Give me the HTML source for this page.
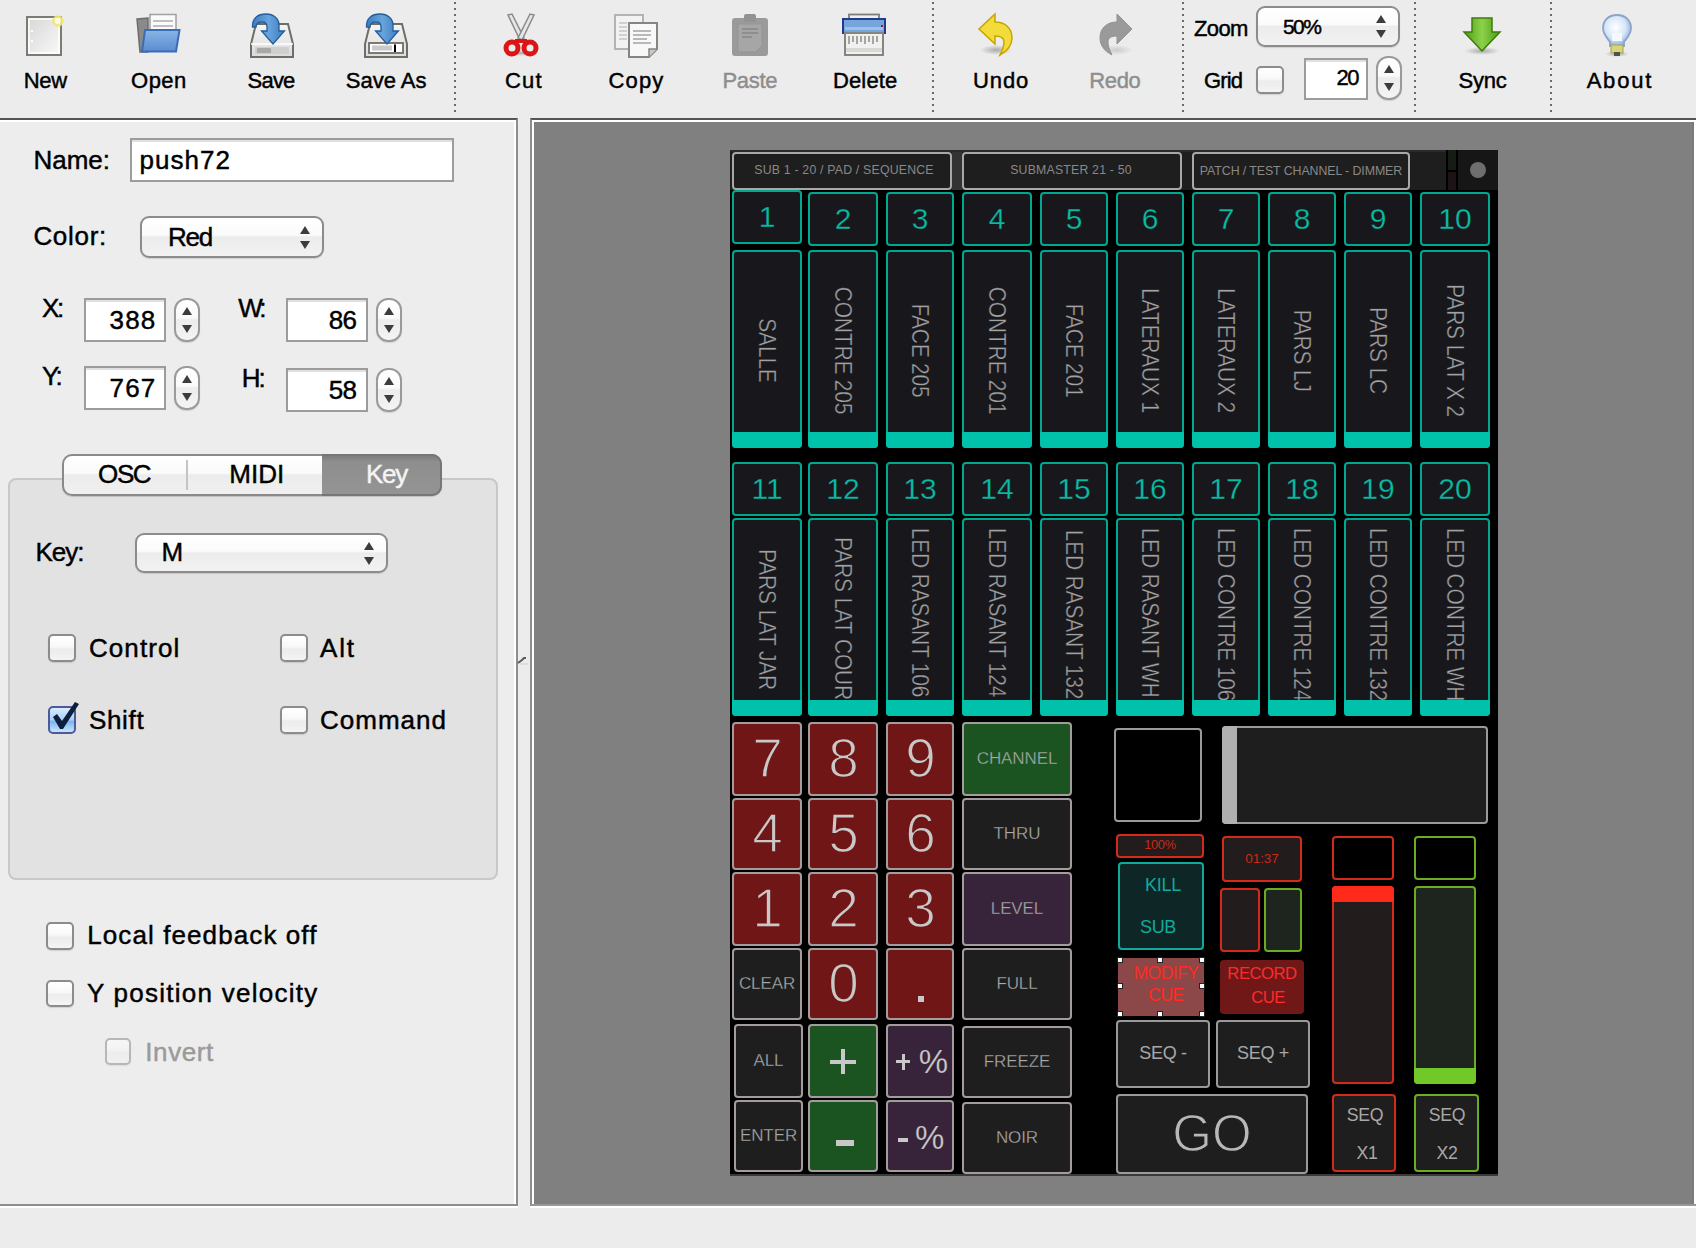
<!DOCTYPE html><html><head><meta charset="utf-8"><style>
html,body{margin:0;padding:0;}body{width:1696px;height:1248px;overflow:hidden;position:relative;background:#ececec;font-family:"Liberation Sans",sans-serif;}
div{position:absolute;}
</style></head><body>
<div style="position:absolute;left:0px;top:118px;width:518px;height:1088px;box-sizing:border-box;background:#ededed;border-top:2px solid #555;border-right:2px solid #8e8e8e;border-bottom:2px solid #8e8e8e;"></div>
<div style="position:absolute;left:0px;top:120px;width:516px;height:2px;box-sizing:border-box;background:#fff;"></div>
<div style="position:absolute;left:514px;top:120px;width:2px;height:1084px;box-sizing:border-box;background:#fff;"></div>
<div style="position:absolute;left:0px;top:1206px;width:518px;height:2px;box-sizing:border-box;background:#fff;"></div>
<div style="position:absolute;left:530px;top:118px;width:1166px;height:1088px;box-sizing:border-box;background:#808080;border-top:2px solid #555;border-left:2px solid #8e8e8e;border-bottom:2px solid #989898;"></div>
<div style="position:absolute;left:532px;top:120px;width:1164px;height:2px;box-sizing:border-box;background:#fff;"></div>
<div style="position:absolute;left:532px;top:120px;width:2px;height:1084px;box-sizing:border-box;background:#fff;"></div>
<div style="position:absolute;left:1692px;top:122px;width:2px;height:1082px;box-sizing:border-box;background:#7a7a7a;"></div>
<div style="position:absolute;left:1694px;top:120px;width:2px;height:1084px;box-sizing:border-box;background:#fff;"></div>
<div style="position:absolute;left:530px;top:1206px;width:1166px;height:2px;box-sizing:border-box;background:#fff;"></div>
<div style="position:absolute;left:730px;top:150px;width:768px;height:1026px;box-sizing:border-box;background:#000;border-bottom:2px solid #3a3a3a;"></div>
<div style="position:absolute;left:730px;top:150px;width:716px;height:40px;box-sizing:border-box;background:#1e1e1e;border-top:2px solid #2a2a2a;"></div>
<div style="position:absolute;left:952px;top:152px;width:10px;height:38px;box-sizing:border-box;background:#333;"></div>
<div style="position:absolute;left:732px;top:152px;width:220px;height:38px;box-sizing:border-box;background:#1e1e1e;border:2px solid #a8a8a8;border-radius:4px;"></div>
<div style="position:absolute;left:962px;top:152px;width:220px;height:38px;box-sizing:border-box;background:#1e1e1e;border:2px solid #a8a8a8;border-radius:4px;"></div>
<div style="position:absolute;left:1192px;top:152px;width:218px;height:38px;box-sizing:border-box;background:#1e1e1e;border:2px solid #a8a8a8;border-radius:4px;"></div>
<div style="position:absolute;left:694.0px;width:300px;text-align:center;top:162.57px;font-size:12.3px;line-height:14.14px;color:#888;white-space:nowrap;letter-spacing:0.2px;">SUB 1 - 20 / PAD / SEQUENCE</div>
<div style="position:absolute;left:921.0px;width:300px;text-align:center;top:162.57px;font-size:12.3px;line-height:14.14px;color:#888;white-space:nowrap;letter-spacing:0.2px;">SUBMASTER 21 - 50</div>
<div style="position:absolute;left:1151.0px;width:300px;text-align:center;top:164.01px;font-size:12.4px;line-height:14.26px;color:#888;white-space:nowrap;letter-spacing:-0.1px;">PATCH / TEST CHANNEL - DIMMER</div>
<div style="position:absolute;left:1448px;top:150px;width:8px;height:20px;box-sizing:border-box;background:#141c14;"></div>
<div style="position:absolute;left:1448px;top:172px;width:8px;height:18px;box-sizing:border-box;background:#1c1414;"></div>
<div style="position:absolute;left:1458px;top:150px;width:40px;height:40px;box-sizing:border-box;background:#161616;"></div>
<div style="position:absolute;left:1470px;top:162px;width:16px;height:16px;border-radius:50%;background:#6e6e6e;"></div>
<div style="position:absolute;left:732px;top:190px;width:70px;height:54px;box-sizing:border-box;background:#17171c;border:2px solid #00a890;border-radius:4px;"></div>
<div style="position:absolute;left:727.0px;width:80px;text-align:center;top:200.09px;font-size:30px;line-height:34.50px;color:#08bca4;white-space:nowrap;-webkit-text-stroke:0.3px #17171c;">1</div>
<div style="position:absolute;left:732px;top:250px;width:70px;height:198px;box-sizing:border-box;background:#17171c;border:2px solid #00a890;border-radius:4px;overflow:hidden;"></div>
<div style="position:absolute;left:617.0px;top:337.9px;width:300px;height:25.2px;line-height:25.2px;text-align:center;font-size:21px;letter-spacing:-0.2px;text-indent:-0.2px;color:#a2a2a2;-webkit-text-stroke:0.35px #17171c;white-space:nowrap;transform:rotate(90deg) scaleY(1.1);">SALLE</div>
<div style="position:absolute;left:732px;top:432px;width:70px;height:16px;box-sizing:border-box;background:#00c2aa;border-radius:0 0 4px 4px;"></div>
<div style="position:absolute;left:808px;top:192px;width:70px;height:54px;box-sizing:border-box;background:#17171c;border:2px solid #00a890;border-radius:4px;"></div>
<div style="position:absolute;left:803.0px;width:80px;text-align:center;top:202.09px;font-size:30px;line-height:34.50px;color:#08bca4;white-space:nowrap;-webkit-text-stroke:0.3px #17171c;">2</div>
<div style="position:absolute;left:808px;top:250px;width:70px;height:198px;box-sizing:border-box;background:#17171c;border:2px solid #00a890;border-radius:4px;overflow:hidden;"></div>
<div style="position:absolute;left:693.0px;top:337.9px;width:300px;height:25.2px;line-height:25.2px;text-align:center;font-size:21px;letter-spacing:-0.2px;text-indent:-0.2px;color:#a2a2a2;-webkit-text-stroke:0.35px #17171c;white-space:nowrap;transform:rotate(90deg) scaleY(1.1);">CONTRE 205</div>
<div style="position:absolute;left:808px;top:432px;width:70px;height:16px;box-sizing:border-box;background:#00c2aa;border-radius:0 0 4px 4px;"></div>
<div style="position:absolute;left:886px;top:192px;width:68px;height:54px;box-sizing:border-box;background:#17171c;border:2px solid #00a890;border-radius:4px;"></div>
<div style="position:absolute;left:880.0px;width:80px;text-align:center;top:202.09px;font-size:30px;line-height:34.50px;color:#08bca4;white-space:nowrap;-webkit-text-stroke:0.3px #17171c;">3</div>
<div style="position:absolute;left:886px;top:250px;width:68px;height:198px;box-sizing:border-box;background:#17171c;border:2px solid #00a890;border-radius:4px;overflow:hidden;"></div>
<div style="position:absolute;left:770.0px;top:337.9px;width:300px;height:25.2px;line-height:25.2px;text-align:center;font-size:21px;letter-spacing:-0.2px;text-indent:-0.2px;color:#a2a2a2;-webkit-text-stroke:0.35px #17171c;white-space:nowrap;transform:rotate(90deg) scaleY(1.1);">FACE 205</div>
<div style="position:absolute;left:886px;top:432px;width:68px;height:16px;box-sizing:border-box;background:#00c2aa;border-radius:0 0 4px 4px;"></div>
<div style="position:absolute;left:962px;top:192px;width:70px;height:54px;box-sizing:border-box;background:#17171c;border:2px solid #00a890;border-radius:4px;"></div>
<div style="position:absolute;left:957.0px;width:80px;text-align:center;top:202.09px;font-size:30px;line-height:34.50px;color:#08bca4;white-space:nowrap;-webkit-text-stroke:0.3px #17171c;">4</div>
<div style="position:absolute;left:962px;top:250px;width:70px;height:198px;box-sizing:border-box;background:#17171c;border:2px solid #00a890;border-radius:4px;overflow:hidden;"></div>
<div style="position:absolute;left:847.0px;top:337.9px;width:300px;height:25.2px;line-height:25.2px;text-align:center;font-size:21px;letter-spacing:-0.2px;text-indent:-0.2px;color:#a2a2a2;-webkit-text-stroke:0.35px #17171c;white-space:nowrap;transform:rotate(90deg) scaleY(1.1);">CONTRE 201</div>
<div style="position:absolute;left:962px;top:432px;width:70px;height:16px;box-sizing:border-box;background:#00c2aa;border-radius:0 0 4px 4px;"></div>
<div style="position:absolute;left:1040px;top:192px;width:68px;height:54px;box-sizing:border-box;background:#17171c;border:2px solid #00a890;border-radius:4px;"></div>
<div style="position:absolute;left:1034.0px;width:80px;text-align:center;top:202.09px;font-size:30px;line-height:34.50px;color:#08bca4;white-space:nowrap;-webkit-text-stroke:0.3px #17171c;">5</div>
<div style="position:absolute;left:1040px;top:250px;width:68px;height:198px;box-sizing:border-box;background:#17171c;border:2px solid #00a890;border-radius:4px;overflow:hidden;"></div>
<div style="position:absolute;left:924.0px;top:337.9px;width:300px;height:25.2px;line-height:25.2px;text-align:center;font-size:21px;letter-spacing:-0.2px;text-indent:-0.2px;color:#a2a2a2;-webkit-text-stroke:0.35px #17171c;white-space:nowrap;transform:rotate(90deg) scaleY(1.1);">FACE 201</div>
<div style="position:absolute;left:1040px;top:432px;width:68px;height:16px;box-sizing:border-box;background:#00c2aa;border-radius:0 0 4px 4px;"></div>
<div style="position:absolute;left:1116px;top:192px;width:68px;height:54px;box-sizing:border-box;background:#17171c;border:2px solid #00a890;border-radius:4px;"></div>
<div style="position:absolute;left:1110.0px;width:80px;text-align:center;top:202.09px;font-size:30px;line-height:34.50px;color:#08bca4;white-space:nowrap;-webkit-text-stroke:0.3px #17171c;">6</div>
<div style="position:absolute;left:1116px;top:250px;width:68px;height:198px;box-sizing:border-box;background:#17171c;border:2px solid #00a890;border-radius:4px;overflow:hidden;"></div>
<div style="position:absolute;left:1000.0px;top:337.9px;width:300px;height:25.2px;line-height:25.2px;text-align:center;font-size:21px;letter-spacing:-0.2px;text-indent:-0.2px;color:#a2a2a2;-webkit-text-stroke:0.35px #17171c;white-space:nowrap;transform:rotate(90deg) scaleY(1.1);">LATERAUX 1</div>
<div style="position:absolute;left:1116px;top:432px;width:68px;height:16px;box-sizing:border-box;background:#00c2aa;border-radius:0 0 4px 4px;"></div>
<div style="position:absolute;left:1192px;top:192px;width:68px;height:54px;box-sizing:border-box;background:#17171c;border:2px solid #00a890;border-radius:4px;"></div>
<div style="position:absolute;left:1186.0px;width:80px;text-align:center;top:202.09px;font-size:30px;line-height:34.50px;color:#08bca4;white-space:nowrap;-webkit-text-stroke:0.3px #17171c;">7</div>
<div style="position:absolute;left:1192px;top:250px;width:68px;height:198px;box-sizing:border-box;background:#17171c;border:2px solid #00a890;border-radius:4px;overflow:hidden;"></div>
<div style="position:absolute;left:1076.0px;top:337.9px;width:300px;height:25.2px;line-height:25.2px;text-align:center;font-size:21px;letter-spacing:-0.2px;text-indent:-0.2px;color:#a2a2a2;-webkit-text-stroke:0.35px #17171c;white-space:nowrap;transform:rotate(90deg) scaleY(1.1);">LATERAUX 2</div>
<div style="position:absolute;left:1192px;top:432px;width:68px;height:16px;box-sizing:border-box;background:#00c2aa;border-radius:0 0 4px 4px;"></div>
<div style="position:absolute;left:1268px;top:192px;width:68px;height:54px;box-sizing:border-box;background:#17171c;border:2px solid #00a890;border-radius:4px;"></div>
<div style="position:absolute;left:1262.0px;width:80px;text-align:center;top:202.09px;font-size:30px;line-height:34.50px;color:#08bca4;white-space:nowrap;-webkit-text-stroke:0.3px #17171c;">8</div>
<div style="position:absolute;left:1268px;top:250px;width:68px;height:198px;box-sizing:border-box;background:#17171c;border:2px solid #00a890;border-radius:4px;overflow:hidden;"></div>
<div style="position:absolute;left:1152.0px;top:337.9px;width:300px;height:25.2px;line-height:25.2px;text-align:center;font-size:21px;letter-spacing:-0.2px;text-indent:-0.2px;color:#a2a2a2;-webkit-text-stroke:0.35px #17171c;white-space:nowrap;transform:rotate(90deg) scaleY(1.1);">PARS LJ</div>
<div style="position:absolute;left:1268px;top:432px;width:68px;height:16px;box-sizing:border-box;background:#00c2aa;border-radius:0 0 4px 4px;"></div>
<div style="position:absolute;left:1344px;top:192px;width:68px;height:54px;box-sizing:border-box;background:#17171c;border:2px solid #00a890;border-radius:4px;"></div>
<div style="position:absolute;left:1338.0px;width:80px;text-align:center;top:202.09px;font-size:30px;line-height:34.50px;color:#08bca4;white-space:nowrap;-webkit-text-stroke:0.3px #17171c;">9</div>
<div style="position:absolute;left:1344px;top:250px;width:68px;height:198px;box-sizing:border-box;background:#17171c;border:2px solid #00a890;border-radius:4px;overflow:hidden;"></div>
<div style="position:absolute;left:1228.0px;top:337.9px;width:300px;height:25.2px;line-height:25.2px;text-align:center;font-size:21px;letter-spacing:-0.2px;text-indent:-0.2px;color:#a2a2a2;-webkit-text-stroke:0.35px #17171c;white-space:nowrap;transform:rotate(90deg) scaleY(1.1);">PARS LC</div>
<div style="position:absolute;left:1344px;top:432px;width:68px;height:16px;box-sizing:border-box;background:#00c2aa;border-radius:0 0 4px 4px;"></div>
<div style="position:absolute;left:1420px;top:192px;width:70px;height:54px;box-sizing:border-box;background:#17171c;border:2px solid #00a890;border-radius:4px;"></div>
<div style="position:absolute;left:1415.0px;width:80px;text-align:center;top:202.09px;font-size:30px;line-height:34.50px;color:#08bca4;white-space:nowrap;-webkit-text-stroke:0.3px #17171c;">10</div>
<div style="position:absolute;left:1420px;top:250px;width:70px;height:198px;box-sizing:border-box;background:#17171c;border:2px solid #00a890;border-radius:4px;overflow:hidden;"></div>
<div style="position:absolute;left:1305.0px;top:337.9px;width:300px;height:25.2px;line-height:25.2px;text-align:center;font-size:21px;letter-spacing:-0.2px;text-indent:-0.2px;color:#a2a2a2;-webkit-text-stroke:0.35px #17171c;white-space:nowrap;transform:rotate(90deg) scaleY(1.1);">PARS LAT X 2</div>
<div style="position:absolute;left:1420px;top:432px;width:70px;height:16px;box-sizing:border-box;background:#00c2aa;border-radius:0 0 4px 4px;"></div>
<div style="position:absolute;left:732px;top:462px;width:70px;height:54px;box-sizing:border-box;background:#17171c;border:2px solid #00a890;border-radius:4px;"></div>
<div style="position:absolute;left:727.0px;width:80px;text-align:center;top:472.10px;font-size:30px;line-height:34.50px;color:#08bca4;white-space:nowrap;-webkit-text-stroke:0.3px #17171c;">11</div>
<div style="position:absolute;left:732px;top:518px;width:70px;height:198px;box-sizing:border-box;background:#17171c;border:2px solid #00a890;border-radius:4px;overflow:hidden;"></div>
<div style="position:absolute;left:617.0px;top:607.4px;width:300px;height:25.2px;line-height:25.2px;text-align:center;font-size:21px;letter-spacing:-0.2px;text-indent:-0.2px;color:#a2a2a2;-webkit-text-stroke:0.35px #17171c;white-space:nowrap;transform:rotate(90deg) scaleY(1.1);">PARS LAT JAR</div>
<div style="position:absolute;left:732px;top:700px;width:70px;height:16px;box-sizing:border-box;background:#00c2aa;border-radius:0 0 4px 4px;"></div>
<div style="position:absolute;left:808px;top:462px;width:70px;height:54px;box-sizing:border-box;background:#17171c;border:2px solid #00a890;border-radius:4px;"></div>
<div style="position:absolute;left:803.0px;width:80px;text-align:center;top:472.10px;font-size:30px;line-height:34.50px;color:#08bca4;white-space:nowrap;-webkit-text-stroke:0.3px #17171c;">12</div>
<div style="position:absolute;left:808px;top:518px;width:70px;height:198px;box-sizing:border-box;background:#17171c;border:2px solid #00a890;border-radius:4px;overflow:hidden;"></div>
<div style="position:absolute;left:693.0px;top:606.0px;width:300px;height:25.2px;line-height:25.2px;text-align:center;font-size:21px;letter-spacing:-0.2px;text-indent:-0.2px;color:#a2a2a2;-webkit-text-stroke:0.35px #17171c;white-space:nowrap;transform:rotate(90deg) scaleY(1.1);">PARS LAT COUR</div>
<div style="position:absolute;left:808px;top:700px;width:70px;height:16px;box-sizing:border-box;background:#00c2aa;border-radius:0 0 4px 4px;"></div>
<div style="position:absolute;left:886px;top:462px;width:68px;height:54px;box-sizing:border-box;background:#17171c;border:2px solid #00a890;border-radius:4px;"></div>
<div style="position:absolute;left:880.0px;width:80px;text-align:center;top:472.10px;font-size:30px;line-height:34.50px;color:#08bca4;white-space:nowrap;-webkit-text-stroke:0.3px #17171c;">13</div>
<div style="position:absolute;left:886px;top:518px;width:68px;height:198px;box-sizing:border-box;background:#17171c;border:2px solid #00a890;border-radius:4px;overflow:hidden;"></div>
<div style="position:absolute;left:770.0px;top:599.7px;width:300px;height:25.2px;line-height:25.2px;text-align:center;font-size:21px;letter-spacing:-0.2px;text-indent:-0.2px;color:#a2a2a2;-webkit-text-stroke:0.35px #17171c;white-space:nowrap;transform:rotate(90deg) scaleY(1.1);">LED RASANT 106</div>
<div style="position:absolute;left:886px;top:700px;width:68px;height:16px;box-sizing:border-box;background:#00c2aa;border-radius:0 0 4px 4px;"></div>
<div style="position:absolute;left:962px;top:462px;width:70px;height:54px;box-sizing:border-box;background:#17171c;border:2px solid #00a890;border-radius:4px;"></div>
<div style="position:absolute;left:957.0px;width:80px;text-align:center;top:472.10px;font-size:30px;line-height:34.50px;color:#08bca4;white-space:nowrap;-webkit-text-stroke:0.3px #17171c;">14</div>
<div style="position:absolute;left:962px;top:518px;width:70px;height:198px;box-sizing:border-box;background:#17171c;border:2px solid #00a890;border-radius:4px;overflow:hidden;"></div>
<div style="position:absolute;left:847.0px;top:599.7px;width:300px;height:25.2px;line-height:25.2px;text-align:center;font-size:21px;letter-spacing:-0.2px;text-indent:-0.2px;color:#a2a2a2;-webkit-text-stroke:0.35px #17171c;white-space:nowrap;transform:rotate(90deg) scaleY(1.1);">LED RASANT 124</div>
<div style="position:absolute;left:962px;top:700px;width:70px;height:16px;box-sizing:border-box;background:#00c2aa;border-radius:0 0 4px 4px;"></div>
<div style="position:absolute;left:1040px;top:462px;width:68px;height:54px;box-sizing:border-box;background:#17171c;border:2px solid #00a890;border-radius:4px;"></div>
<div style="position:absolute;left:1034.0px;width:80px;text-align:center;top:472.10px;font-size:30px;line-height:34.50px;color:#08bca4;white-space:nowrap;-webkit-text-stroke:0.3px #17171c;">15</div>
<div style="position:absolute;left:1040px;top:518px;width:68px;height:198px;box-sizing:border-box;background:#17171c;border:2px solid #00a890;border-radius:4px;overflow:hidden;"></div>
<div style="position:absolute;left:924.0px;top:601.5px;width:300px;height:25.2px;line-height:25.2px;text-align:center;font-size:21px;letter-spacing:-0.2px;text-indent:-0.2px;color:#a2a2a2;-webkit-text-stroke:0.35px #17171c;white-space:nowrap;transform:rotate(90deg) scaleY(1.1);">LED RASANT 132</div>
<div style="position:absolute;left:1040px;top:700px;width:68px;height:16px;box-sizing:border-box;background:#00c2aa;border-radius:0 0 4px 4px;"></div>
<div style="position:absolute;left:1116px;top:462px;width:68px;height:54px;box-sizing:border-box;background:#17171c;border:2px solid #00a890;border-radius:4px;"></div>
<div style="position:absolute;left:1110.0px;width:80px;text-align:center;top:472.10px;font-size:30px;line-height:34.50px;color:#08bca4;white-space:nowrap;-webkit-text-stroke:0.3px #17171c;">16</div>
<div style="position:absolute;left:1116px;top:518px;width:68px;height:198px;box-sizing:border-box;background:#17171c;border:2px solid #00a890;border-radius:4px;overflow:hidden;"></div>
<div style="position:absolute;left:1000.0px;top:599.9px;width:300px;height:25.2px;line-height:25.2px;text-align:center;font-size:21px;letter-spacing:-0.2px;text-indent:-0.2px;color:#a2a2a2;-webkit-text-stroke:0.35px #17171c;white-space:nowrap;transform:rotate(90deg) scaleY(1.1);">LED RASANT WH</div>
<div style="position:absolute;left:1116px;top:700px;width:68px;height:16px;box-sizing:border-box;background:#00c2aa;border-radius:0 0 4px 4px;"></div>
<div style="position:absolute;left:1192px;top:462px;width:68px;height:54px;box-sizing:border-box;background:#17171c;border:2px solid #00a890;border-radius:4px;"></div>
<div style="position:absolute;left:1186.0px;width:80px;text-align:center;top:472.10px;font-size:30px;line-height:34.50px;color:#08bca4;white-space:nowrap;-webkit-text-stroke:0.3px #17171c;">17</div>
<div style="position:absolute;left:1192px;top:518px;width:68px;height:198px;box-sizing:border-box;background:#17171c;border:2px solid #00a890;border-radius:4px;overflow:hidden;"></div>
<div style="position:absolute;left:1076.0px;top:601.8px;width:300px;height:25.2px;line-height:25.2px;text-align:center;font-size:21px;letter-spacing:-0.2px;text-indent:-0.2px;color:#a2a2a2;-webkit-text-stroke:0.35px #17171c;white-space:nowrap;transform:rotate(90deg) scaleY(1.1);">LED CONTRE 106</div>
<div style="position:absolute;left:1192px;top:700px;width:68px;height:16px;box-sizing:border-box;background:#00c2aa;border-radius:0 0 4px 4px;"></div>
<div style="position:absolute;left:1268px;top:462px;width:68px;height:54px;box-sizing:border-box;background:#17171c;border:2px solid #00a890;border-radius:4px;"></div>
<div style="position:absolute;left:1262.0px;width:80px;text-align:center;top:472.10px;font-size:30px;line-height:34.50px;color:#08bca4;white-space:nowrap;-webkit-text-stroke:0.3px #17171c;">18</div>
<div style="position:absolute;left:1268px;top:518px;width:68px;height:198px;box-sizing:border-box;background:#17171c;border:2px solid #00a890;border-radius:4px;overflow:hidden;"></div>
<div style="position:absolute;left:1152.0px;top:601.8px;width:300px;height:25.2px;line-height:25.2px;text-align:center;font-size:21px;letter-spacing:-0.2px;text-indent:-0.2px;color:#a2a2a2;-webkit-text-stroke:0.35px #17171c;white-space:nowrap;transform:rotate(90deg) scaleY(1.1);">LED CONTRE 124</div>
<div style="position:absolute;left:1268px;top:700px;width:68px;height:16px;box-sizing:border-box;background:#00c2aa;border-radius:0 0 4px 4px;"></div>
<div style="position:absolute;left:1344px;top:462px;width:68px;height:54px;box-sizing:border-box;background:#17171c;border:2px solid #00a890;border-radius:4px;"></div>
<div style="position:absolute;left:1338.0px;width:80px;text-align:center;top:472.10px;font-size:30px;line-height:34.50px;color:#08bca4;white-space:nowrap;-webkit-text-stroke:0.3px #17171c;">19</div>
<div style="position:absolute;left:1344px;top:518px;width:68px;height:198px;box-sizing:border-box;background:#17171c;border:2px solid #00a890;border-radius:4px;overflow:hidden;"></div>
<div style="position:absolute;left:1228.0px;top:601.8px;width:300px;height:25.2px;line-height:25.2px;text-align:center;font-size:21px;letter-spacing:-0.2px;text-indent:-0.2px;color:#a2a2a2;-webkit-text-stroke:0.35px #17171c;white-space:nowrap;transform:rotate(90deg) scaleY(1.1);">LED CONTRE 132</div>
<div style="position:absolute;left:1344px;top:700px;width:68px;height:16px;box-sizing:border-box;background:#00c2aa;border-radius:0 0 4px 4px;"></div>
<div style="position:absolute;left:1420px;top:462px;width:70px;height:54px;box-sizing:border-box;background:#17171c;border:2px solid #00a890;border-radius:4px;"></div>
<div style="position:absolute;left:1415.0px;width:80px;text-align:center;top:472.10px;font-size:30px;line-height:34.50px;color:#08bca4;white-space:nowrap;-webkit-text-stroke:0.3px #17171c;">20</div>
<div style="position:absolute;left:1420px;top:518px;width:70px;height:198px;box-sizing:border-box;background:#17171c;border:2px solid #00a890;border-radius:4px;overflow:hidden;"></div>
<div style="position:absolute;left:1305.0px;top:601.9px;width:300px;height:25.2px;line-height:25.2px;text-align:center;font-size:21px;letter-spacing:-0.2px;text-indent:-0.2px;color:#a2a2a2;-webkit-text-stroke:0.35px #17171c;white-space:nowrap;transform:rotate(90deg) scaleY(1.1);">LED CONTRE WH</div>
<div style="position:absolute;left:1420px;top:700px;width:70px;height:16px;box-sizing:border-box;background:#00c2aa;border-radius:0 0 4px 4px;"></div>
<div style="position:absolute;left:732px;top:722px;width:70px;height:74px;box-sizing:border-box;background:#701616;border:2px solid #a49c9c;border-radius:4px;"></div>
<div style="position:absolute;left:727.5px;width:80px;text-align:center;top:726.81px;font-size:55px;line-height:63.25px;color:#c8c8c8;white-space:nowrap;-webkit-text-stroke:1.5px #701616;">7</div>
<div style="position:absolute;left:808px;top:722px;width:70px;height:74px;box-sizing:border-box;background:#701616;border:2px solid #a49c9c;border-radius:4px;"></div>
<div style="position:absolute;left:803.5px;width:80px;text-align:center;top:726.81px;font-size:55px;line-height:63.25px;color:#c8c8c8;white-space:nowrap;-webkit-text-stroke:1.5px #701616;">8</div>
<div style="position:absolute;left:886px;top:722px;width:68px;height:74px;box-sizing:border-box;background:#701616;border:2px solid #a49c9c;border-radius:4px;"></div>
<div style="position:absolute;left:880.5px;width:80px;text-align:center;top:726.81px;font-size:55px;line-height:63.25px;color:#c8c8c8;white-space:nowrap;-webkit-text-stroke:1.5px #701616;">9</div>
<div style="position:absolute;left:962px;top:722px;width:110px;height:74px;box-sizing:border-box;background:#1b5421;border:2px solid #a49c9c;border-radius:4px;"></div>
<div style="position:absolute;left:957.0px;width:120px;text-align:center;top:749.42px;font-size:17px;line-height:19.55px;color:#aaaaaa;white-space:nowrap;letter-spacing:-0.1px;-webkit-text-stroke:0.3px #1b5421;">CHANNEL</div>
<div style="position:absolute;left:732px;top:798px;width:70px;height:72px;box-sizing:border-box;background:#701616;border:2px solid #a49c9c;border-radius:4px;"></div>
<div style="position:absolute;left:727.5px;width:80px;text-align:center;top:801.81px;font-size:55px;line-height:63.25px;color:#c8c8c8;white-space:nowrap;-webkit-text-stroke:1.5px #701616;">4</div>
<div style="position:absolute;left:808px;top:798px;width:70px;height:72px;box-sizing:border-box;background:#701616;border:2px solid #a49c9c;border-radius:4px;"></div>
<div style="position:absolute;left:803.5px;width:80px;text-align:center;top:801.81px;font-size:55px;line-height:63.25px;color:#c8c8c8;white-space:nowrap;-webkit-text-stroke:1.5px #701616;">5</div>
<div style="position:absolute;left:886px;top:798px;width:68px;height:72px;box-sizing:border-box;background:#701616;border:2px solid #a49c9c;border-radius:4px;"></div>
<div style="position:absolute;left:880.5px;width:80px;text-align:center;top:801.81px;font-size:55px;line-height:63.25px;color:#c8c8c8;white-space:nowrap;-webkit-text-stroke:1.5px #701616;">6</div>
<div style="position:absolute;left:962px;top:798px;width:110px;height:72px;box-sizing:border-box;background:#1e1e1e;border:2px solid #a49c9c;border-radius:4px;"></div>
<div style="position:absolute;left:957.0px;width:120px;text-align:center;top:824.42px;font-size:17px;line-height:19.55px;color:#aaaaaa;white-space:nowrap;letter-spacing:-0.1px;-webkit-text-stroke:0.3px #1e1e1e;">THRU</div>
<div style="position:absolute;left:732px;top:872px;width:70px;height:74px;box-sizing:border-box;background:#701616;border:2px solid #a49c9c;border-radius:4px;"></div>
<div style="position:absolute;left:727.5px;width:80px;text-align:center;top:876.81px;font-size:55px;line-height:63.25px;color:#c8c8c8;white-space:nowrap;-webkit-text-stroke:1.5px #701616;">1</div>
<div style="position:absolute;left:808px;top:872px;width:70px;height:74px;box-sizing:border-box;background:#701616;border:2px solid #a49c9c;border-radius:4px;"></div>
<div style="position:absolute;left:803.5px;width:80px;text-align:center;top:876.81px;font-size:55px;line-height:63.25px;color:#c8c8c8;white-space:nowrap;-webkit-text-stroke:1.5px #701616;">2</div>
<div style="position:absolute;left:886px;top:872px;width:68px;height:74px;box-sizing:border-box;background:#701616;border:2px solid #a49c9c;border-radius:4px;"></div>
<div style="position:absolute;left:880.5px;width:80px;text-align:center;top:876.81px;font-size:55px;line-height:63.25px;color:#c8c8c8;white-space:nowrap;-webkit-text-stroke:1.5px #701616;">3</div>
<div style="position:absolute;left:962px;top:872px;width:110px;height:74px;box-sizing:border-box;background:#38243a;border:2px solid #a49c9c;border-radius:4px;"></div>
<div style="position:absolute;left:957.0px;width:120px;text-align:center;top:899.42px;font-size:17px;line-height:19.55px;color:#aaaaaa;white-space:nowrap;letter-spacing:-0.1px;-webkit-text-stroke:0.3px #38243a;">LEVEL</div>
<div style="position:absolute;left:732px;top:948px;width:70px;height:72px;box-sizing:border-box;background:#1e1e1e;border:2px solid #a49c9c;border-radius:4px;"></div>
<div style="position:absolute;left:707.0px;width:120px;text-align:center;top:974.42px;font-size:17px;line-height:19.55px;color:#aaaaaa;white-space:nowrap;letter-spacing:-0.1px;-webkit-text-stroke:0.3px #1e1e1e;">CLEAR</div>
<div style="position:absolute;left:808px;top:948px;width:70px;height:72px;box-sizing:border-box;background:#701616;border:2px solid #a49c9c;border-radius:4px;"></div>
<div style="position:absolute;left:803.5px;width:80px;text-align:center;top:951.81px;font-size:55px;line-height:63.25px;color:#c8c8c8;white-space:nowrap;-webkit-text-stroke:1.5px #701616;">0</div>
<div style="position:absolute;left:886px;top:948px;width:68px;height:72px;box-sizing:border-box;background:#701616;border:2px solid #a49c9c;border-radius:4px;"></div>
<div style="position:absolute;left:918px;top:996px;width:6px;height:6px;box-sizing:border-box;background:#c8c8c8;"></div>
<div style="position:absolute;left:962px;top:948px;width:110px;height:72px;box-sizing:border-box;background:#1e1e1e;border:2px solid #a49c9c;border-radius:4px;"></div>
<div style="position:absolute;left:957.0px;width:120px;text-align:center;top:974.42px;font-size:17px;line-height:19.55px;color:#aaaaaa;white-space:nowrap;letter-spacing:-0.1px;-webkit-text-stroke:0.3px #1e1e1e;">FULL</div>
<div style="position:absolute;left:734px;top:1024px;width:69px;height:74px;box-sizing:border-box;background:#1e1e1e;border:2px solid #a49c9c;border-radius:4px;"></div>
<div style="position:absolute;left:708.5px;width:120px;text-align:center;top:1051.42px;font-size:17px;line-height:19.55px;color:#aaaaaa;white-space:nowrap;letter-spacing:-0.1px;-webkit-text-stroke:0.3px #1e1e1e;">ALL</div>
<div style="position:absolute;left:808px;top:1024px;width:70px;height:74px;box-sizing:border-box;background:#1b5421;border:2px solid #a49c9c;border-radius:4px;"></div>
<div style="position:absolute;left:830px;top:1060px;width:26px;height:4px;box-sizing:border-box;background:#c8c8c8;"></div>
<div style="position:absolute;left:841px;top:1049px;width:4px;height:25px;box-sizing:border-box;background:#c8c8c8;"></div>
<div style="position:absolute;left:886px;top:1024px;width:68px;height:74px;box-sizing:border-box;background:#38243a;border:2px solid #a49c9c;border-radius:4px;"></div>
<div style="position:absolute;left:896px;top:1060px;width:14px;height:3px;box-sizing:border-box;background:#c8c8c8;"></div>
<div style="position:absolute;left:901.5px;top:1054px;width:3.0px;height:16px;box-sizing:border-box;background:#c8c8c8;"></div>
<div style="position:absolute;left:903.5px;width:60px;text-align:center;top:1042.99px;font-size:33px;line-height:37.95px;color:#c8c8c8;white-space:nowrap;-webkit-text-stroke:0.2px #38243a;">%</div>
<div style="position:absolute;left:962px;top:1026px;width:110px;height:72px;box-sizing:border-box;background:#1e1e1e;border:2px solid #a49c9c;border-radius:4px;"></div>
<div style="position:absolute;left:957.0px;width:120px;text-align:center;top:1052.42px;font-size:17px;line-height:19.55px;color:#aaaaaa;white-space:nowrap;letter-spacing:-0.1px;-webkit-text-stroke:0.3px #1e1e1e;">FREEZE</div>
<div style="position:absolute;left:734px;top:1100px;width:69px;height:72px;box-sizing:border-box;background:#1e1e1e;border:2px solid #a49c9c;border-radius:4px;"></div>
<div style="position:absolute;left:708.5px;width:120px;text-align:center;top:1126.42px;font-size:17px;line-height:19.55px;color:#aaaaaa;white-space:nowrap;letter-spacing:-0.1px;-webkit-text-stroke:0.3px #1e1e1e;">ENTER</div>
<div style="position:absolute;left:808px;top:1100px;width:70px;height:72px;box-sizing:border-box;background:#1b5421;border:2px solid #a49c9c;border-radius:4px;"></div>
<div style="position:absolute;left:836px;top:1140px;width:18px;height:6px;box-sizing:border-box;background:#c8c8c8;"></div>
<div style="position:absolute;left:886px;top:1100px;width:68px;height:72px;box-sizing:border-box;background:#38243a;border:2px solid #a49c9c;border-radius:4px;"></div>
<div style="position:absolute;left:898px;top:1138px;width:10px;height:4px;box-sizing:border-box;background:#c8c8c8;"></div>
<div style="position:absolute;left:899.7px;width:60px;text-align:center;top:1118.99px;font-size:33px;line-height:37.95px;color:#c8c8c8;white-space:nowrap;-webkit-text-stroke:0.2px #38243a;">%</div>
<div style="position:absolute;left:962px;top:1102px;width:110px;height:72px;box-sizing:border-box;background:#1e1e1e;border:2px solid #a49c9c;border-radius:4px;"></div>
<div style="position:absolute;left:957.0px;width:120px;text-align:center;top:1128.42px;font-size:17px;line-height:19.55px;color:#aaaaaa;white-space:nowrap;letter-spacing:-0.1px;-webkit-text-stroke:0.3px #1e1e1e;">NOIR</div>
<div style="position:absolute;left:1114px;top:728px;width:88px;height:94px;box-sizing:border-box;background:#000;border:2px solid #9a9a9a;border-radius:4px;"></div>
<div style="position:absolute;left:1222px;top:726px;width:266px;height:98px;box-sizing:border-box;background:#1e1e1e;border:2px solid #9a9a9a;border-radius:4px;"></div>
<div style="position:absolute;left:1222px;top:726px;width:15px;height:98px;box-sizing:border-box;background:#b0b0b0;border-radius:4px 0 0 4px;"></div>
<div style="position:absolute;left:1116px;top:834px;width:88px;height:24px;box-sizing:border-box;background:#231c1c;border:2px solid #d42a1a;border-radius:4px;"></div>
<div style="position:absolute;left:1120.0px;width:80px;text-align:center;top:838.29px;font-size:12.8px;line-height:14.72px;color:#c82a1a;white-space:nowrap;letter-spacing:-0.3px;">100%</div>
<div style="position:absolute;left:1118px;top:862px;width:86px;height:88px;box-sizing:border-box;background:#0f2626;border:2px solid #10aa9c;border-radius:4px;"></div>
<div style="position:absolute;left:1123.0px;width:80px;text-align:center;top:874.86px;font-size:18px;line-height:20.70px;color:#10aa9c;white-space:nowrap;letter-spacing:-0.3px;">KILL</div>
<div style="position:absolute;left:1118.0px;width:80px;text-align:center;top:916.86px;font-size:18px;line-height:20.70px;color:#10aa9c;white-space:nowrap;letter-spacing:-0.3px;">SUB</div>
<div style="position:absolute;left:1222px;top:836px;width:80px;height:46px;box-sizing:border-box;background:#231c1c;border:2px solid #d42a1a;border-radius:4px;"></div>
<div style="position:absolute;left:1222.0px;width:80px;text-align:center;top:851.39px;font-size:13.5px;line-height:15.52px;color:#c82a1a;white-space:nowrap;letter-spacing:-0.1px;">01:37</div>
<div style="position:absolute;left:1220px;top:888px;width:40px;height:64px;box-sizing:border-box;background:#231c1c;border:2px solid #d42a1a;border-radius:4px;"></div>
<div style="position:absolute;left:1264px;top:888px;width:38px;height:64px;box-sizing:border-box;background:#1e241e;border:2px solid #6aac22;border-radius:4px;"></div>
<div style="position:absolute;left:1118px;top:958px;width:86px;height:58px;box-sizing:border-box;background:#8c4848;border-radius:4px;"></div>
<div style="position:absolute;left:1121.0px;width:90px;text-align:center;top:963.14px;font-size:17.5px;line-height:20.12px;color:#ff2a20;white-space:nowrap;letter-spacing:-0.5px;">MODIFY</div>
<div style="position:absolute;left:1121.0px;width:90px;text-align:center;top:985.14px;font-size:17.5px;line-height:20.12px;color:#ff2a20;white-space:nowrap;letter-spacing:-0.5px;">CUE</div>
<div style="position:absolute;left:1117px;top:957px;width:6px;height:6px;box-sizing:border-box;background:#fff;border:1px solid #222;"></div>
<div style="position:absolute;left:1117px;top:983px;width:6px;height:6px;box-sizing:border-box;background:#fff;border:1px solid #222;"></div>
<div style="position:absolute;left:1117px;top:1011px;width:6px;height:6px;box-sizing:border-box;background:#fff;border:1px solid #222;"></div>
<div style="position:absolute;left:1157px;top:957px;width:6px;height:6px;box-sizing:border-box;background:#fff;border:1px solid #222;"></div>
<div style="position:absolute;left:1157px;top:1011px;width:6px;height:6px;box-sizing:border-box;background:#fff;border:1px solid #222;"></div>
<div style="position:absolute;left:1199px;top:957px;width:6px;height:6px;box-sizing:border-box;background:#fff;border:1px solid #222;"></div>
<div style="position:absolute;left:1199px;top:983px;width:6px;height:6px;box-sizing:border-box;background:#fff;border:1px solid #222;"></div>
<div style="position:absolute;left:1199px;top:1011px;width:6px;height:6px;box-sizing:border-box;background:#fff;border:1px solid #222;"></div>
<div style="position:absolute;left:1220px;top:960px;width:84px;height:54px;box-sizing:border-box;background:#701818;border-radius:4px;"></div>
<div style="position:absolute;left:1217.0px;width:90px;text-align:center;top:963.59px;font-size:16.7px;line-height:19.20px;color:#ff2a2a;white-space:nowrap;letter-spacing:-0.5px;">RECORD</div>
<div style="position:absolute;left:1223.0px;width:90px;text-align:center;top:987.59px;font-size:16.7px;line-height:19.20px;color:#ff2a2a;white-space:nowrap;letter-spacing:-0.5px;">CUE</div>
<div style="position:absolute;left:1116px;top:1020px;width:94px;height:68px;box-sizing:border-box;background:#1e1e1e;border:2px solid #9a9a9a;border-radius:4px;"></div>
<div style="position:absolute;left:1118.0px;width:90px;text-align:center;top:1042.86px;font-size:18px;line-height:20.70px;color:#a8a8a8;white-space:nowrap;letter-spacing:-0.3px;">SEQ -</div>
<div style="position:absolute;left:1216px;top:1020px;width:94px;height:68px;box-sizing:border-box;background:#1e1e1e;border:2px solid #9a9a9a;border-radius:4px;"></div>
<div style="position:absolute;left:1218.0px;width:90px;text-align:center;top:1042.86px;font-size:18px;line-height:20.70px;color:#a8a8a8;white-space:nowrap;letter-spacing:-0.3px;">SEQ +</div>
<div style="position:absolute;left:1116px;top:1094px;width:192px;height:80px;box-sizing:border-box;background:#1e1e1e;border:2px solid #9a9a9a;border-radius:4px;"></div>
<div style="position:absolute;left:1112.0px;width:200px;text-align:center;top:1105.26px;font-size:51px;line-height:58.65px;color:#b8b8b8;white-space:nowrap;-webkit-text-stroke:1.3px #1e1e1e;">GO</div>
<div style="position:absolute;left:1332px;top:836px;width:62px;height:44px;box-sizing:border-box;background:#000;border:2px solid #d42a1a;border-radius:4px;"></div>
<div style="position:absolute;left:1414px;top:836px;width:62px;height:44px;box-sizing:border-box;background:#000;border:2px solid #6aac22;border-radius:4px;"></div>
<div style="position:absolute;left:1332px;top:886px;width:62px;height:198px;box-sizing:border-box;background:#231c1c;border:2px solid #d42a1a;border-radius:4px;"></div>
<div style="position:absolute;left:1332px;top:886px;width:62px;height:16px;box-sizing:border-box;background:#ff2a1a;border-radius:4px 4px 0 0;"></div>
<div style="position:absolute;left:1414px;top:886px;width:62px;height:198px;box-sizing:border-box;background:#1e241e;border:2px solid #6aac22;border-radius:4px;"></div>
<div style="position:absolute;left:1414px;top:1068px;width:62px;height:16px;box-sizing:border-box;background:#72c828;border-radius:0 0 4px 4px;"></div>
<div style="position:absolute;left:1332px;top:1094px;width:64px;height:78px;box-sizing:border-box;background:#1e1e1e;border:2px solid #d42a1a;border-radius:4px;"></div>
<div style="position:absolute;left:1325.0px;width:80px;text-align:center;top:1104.53px;font-size:17.7px;line-height:20.35px;color:#a8a8a8;white-space:nowrap;letter-spacing:-0.3px;">SEQ</div>
<div style="position:absolute;left:1327.0px;width:80px;text-align:center;top:1143.03px;font-size:17.7px;line-height:20.35px;color:#a8a8a8;white-space:nowrap;letter-spacing:-0.3px;">X1</div>
<div style="position:absolute;left:1414px;top:1094px;width:65px;height:78px;box-sizing:border-box;background:#1e1e1e;border:2px solid #6aac22;border-radius:4px;"></div>
<div style="position:absolute;left:1407.0px;width:80px;text-align:center;top:1104.53px;font-size:17.7px;line-height:20.35px;color:#a8a8a8;white-space:nowrap;letter-spacing:-0.3px;">SEQ</div>
<div style="position:absolute;left:1407.0px;width:80px;text-align:center;top:1143.03px;font-size:17.7px;line-height:20.35px;color:#a8a8a8;white-space:nowrap;letter-spacing:-0.3px;">X2</div>
<div style="position:absolute;left:454px;top:2px;width:2px;height:110px;background-image:linear-gradient(#6a6a6a 2px, transparent 2px);background-size:2px 6px;"></div>
<div style="position:absolute;left:932px;top:2px;width:2px;height:110px;background-image:linear-gradient(#6a6a6a 2px, transparent 2px);background-size:2px 6px;"></div>
<div style="position:absolute;left:1182px;top:2px;width:2px;height:110px;background-image:linear-gradient(#6a6a6a 2px, transparent 2px);background-size:2px 6px;"></div>
<div style="position:absolute;left:1414px;top:2px;width:2px;height:110px;background-image:linear-gradient(#6a6a6a 2px, transparent 2px);background-size:2px 6px;"></div>
<div style="position:absolute;left:1550px;top:2px;width:2px;height:110px;background-image:linear-gradient(#6a6a6a 2px, transparent 2px);background-size:2px 6px;"></div>
<div style="position:absolute;left:-54.75px;width:200px;text-align:center;top:67.73px;font-size:22px;line-height:25.30px;color:#000;white-space:nowrap;letter-spacing:-0.3px;-webkit-text-stroke-width:0.45px;">New</div>
<div style="position:absolute;left:58.94999999999999px;width:200px;text-align:center;top:67.73px;font-size:22px;line-height:25.30px;color:#000;white-space:nowrap;letter-spacing:0.5px;-webkit-text-stroke-width:0.45px;">Open</div>
<div style="position:absolute;left:171.10000000000002px;width:200px;text-align:center;top:67.73px;font-size:22px;line-height:25.30px;color:#000;white-space:nowrap;letter-spacing:-0.8px;-webkit-text-stroke-width:0.45px;">Save</div>
<div style="position:absolute;left:286.1px;width:200px;text-align:center;top:67.73px;font-size:22px;line-height:25.30px;color:#000;white-space:nowrap;letter-spacing:0px;-webkit-text-stroke-width:0.45px;">Save As</div>
<div style="position:absolute;left:423.80000000000007px;width:200px;text-align:center;top:67.73px;font-size:22px;line-height:25.30px;color:#000;white-space:nowrap;letter-spacing:1.2px;-webkit-text-stroke-width:0.45px;">Cut</div>
<div style="position:absolute;left:536.5px;width:200px;text-align:center;top:67.73px;font-size:22px;line-height:25.30px;color:#000;white-space:nowrap;letter-spacing:1.2px;-webkit-text-stroke-width:0.45px;">Copy</div>
<div style="position:absolute;left:649.85px;width:200px;text-align:center;top:67.73px;font-size:22px;line-height:25.30px;color:#8e8e8e;white-space:nowrap;letter-spacing:-0.3px;-webkit-text-stroke-width:0.45px;">Paste</div>
<div style="position:absolute;left:765.1750000000001px;width:200px;text-align:center;top:67.73px;font-size:22px;line-height:25.30px;color:#000;white-space:nowrap;letter-spacing:0.15px;-webkit-text-stroke-width:0.45px;">Delete</div>
<div style="position:absolute;left:901.1500000000001px;width:200px;text-align:center;top:67.73px;font-size:22px;line-height:25.30px;color:#000;white-space:nowrap;letter-spacing:0.9px;-webkit-text-stroke-width:0.45px;">Undo</div>
<div style="position:absolute;left:1014.8499999999999px;width:200px;text-align:center;top:67.73px;font-size:22px;line-height:25.30px;color:#8e8e8e;white-space:nowrap;letter-spacing:-0.3px;-webkit-text-stroke-width:0.45px;">Redo</div>
<div style="position:absolute;left:1382.5px;width:200px;text-align:center;top:67.73px;font-size:22px;line-height:25.30px;color:#000;white-space:nowrap;letter-spacing:-0.2px;-webkit-text-stroke-width:0.45px;">Sync</div>
<div style="position:absolute;left:1519.9px;width:200px;text-align:center;top:67.73px;font-size:22px;line-height:25.30px;color:#000;white-space:nowrap;letter-spacing:1.8px;-webkit-text-stroke-width:0.45px;">About</div>

<svg style="position:absolute;left:0;top:0" width="1696" height="118">
<defs>
 <linearGradient id="gpage" x1="0" y1="0" x2="1" y2="1"><stop offset="0" stop-color="#d6d6d6"/><stop offset="1" stop-color="#fafafa"/></linearGradient>
 <linearGradient id="gblue" x1="0" y1="0" x2="0" y2="1"><stop offset="0" stop-color="#8ab4e6"/><stop offset="1" stop-color="#5a8cd0"/></linearGradient>
 <linearGradient id="garrow" x1="0" y1="0" x2="1" y2="0"><stop offset="0" stop-color="#3c7cc0"/><stop offset="0.5" stop-color="#68a4dc"/><stop offset="1" stop-color="#3c7cc0"/></linearGradient>
 <linearGradient id="ggreen" x1="0" y1="0" x2="1" y2="0"><stop offset="0" stop-color="#4c9c12"/><stop offset="0.5" stop-color="#8cd24a"/><stop offset="1" stop-color="#4c9c12"/></linearGradient>
 <radialGradient id="gbulb" cx="0.45" cy="0.4" r="0.6"><stop offset="0" stop-color="#ffffff"/><stop offset="0.6" stop-color="#d8e6f8"/><stop offset="1" stop-color="#8eb0e0"/></radialGradient>
 <radialGradient id="gshadow" cx="0.5" cy="0.5" r="0.5"><stop offset="0" stop-color="#000" stop-opacity="0.28"/><stop offset="1" stop-color="#000" stop-opacity="0"/></radialGradient>
 <linearGradient id="gdrive" x1="0" y1="0" x2="0" y2="1"><stop offset="0" stop-color="#f4f4f4"/><stop offset="1" stop-color="#dcdcdc"/></linearGradient>
</defs>
<!-- New -->
<rect x="27" y="17" width="34" height="38" fill="url(#gpage)" stroke="#7c7c74" stroke-width="2"/>
<rect x="29" y="19" width="30" height="34" fill="none" stroke="#fff" stroke-width="1.5"/>
<circle cx="58" cy="21" r="4.5" fill="#fffbe0" stroke="#f2e870" stroke-width="2.5" opacity="0.9"/>
<rect x="31" y="30" width="2" height="2" fill="#fff"/><rect x="31" y="40" width="2" height="2" fill="#fff"/>
<!-- Open -->
<polygon points="137,19 148,18 148,52 140,52" fill="#8a8a8a" stroke="#6c6c6c" stroke-width="1.5"/>
<rect x="150" y="14.5" width="26" height="20" fill="#fafafa" stroke="#a0a0a0" stroke-width="1.5"/>
<rect x="153" y="20" width="20" height="2" fill="#c0c0c0"/><rect x="153" y="25" width="20" height="2" fill="#c0c0c0"/>
<polygon points="145,30 179.5,30 176,51.5 142,51.5" fill="url(#gblue)" stroke="#3a6cb8" stroke-width="2"/>
<!-- Save -->
<polygon points="256,24 288,24 293,44 293,57 251,57 251,44" fill="url(#gdrive)" stroke="#6e6e66" stroke-width="2"/>
<line x1="251" y1="44" x2="293" y2="44" stroke="#fff" stroke-width="1.5"/>
<rect x="255" y="47" width="34" height="7" fill="#cfcfcf"/><rect x="257" y="48" width="14" height="5" fill="#a8a8a8"/>
<path d="M252.5,27 C252,18 258,14 266,14 C274,14 279,19 279,25 L279,31 L284.5,31 L273,44 L261.5,31 L267,31 L267,27 C267,23.5 265,22 262,22 C258,22 256,24 256,27 Z" fill="url(#garrow)" stroke="#245c9c" stroke-width="1.3"/>
<!-- Save As -->
<polygon points="370,24 402,24 407,44 407,57 365,57 365,44" fill="url(#gdrive)" stroke="#6e6e66" stroke-width="2"/>
<rect x="369" y="43" width="34" height="10" fill="#fff" stroke="#6e6e66" stroke-width="1.8"/>
<rect x="372" y="45.5" width="20" height="5" fill="#cacaca"/><rect x="394" y="44.5" width="2" height="7.5" fill="#000"/>
<path d="M366.5,27 C366,18 372,14 380,14 C388,14 393,19 393,25 L393,31 L398.5,31 L387,44 L375.5,31 L381,31 L381,27 C381,23.5 379,22 376,22 C372,22 370,24 370,27 Z" fill="url(#garrow)" stroke="#245c9c" stroke-width="1.3"/>
<!-- Cut -->
<path d="M508,15 L512,14 L524,38 L520,40 Z" fill="#e6e6e6" stroke="#8a8a8a" stroke-width="1.5"/>
<path d="M534,15 L530,14 L518,38 L522,40 Z" fill="#e6e6e6" stroke="#8a8a8a" stroke-width="1.5"/>
<ellipse cx="521" cy="53" rx="14" ry="3" fill="url(#gshadow)"/>
<circle cx="512" cy="48" r="6" fill="none" stroke="#dc1616" stroke-width="5"/>
<circle cx="530" cy="48" r="6" fill="none" stroke="#dc1616" stroke-width="5"/>
<rect x="515" y="39" width="12" height="4" fill="#dc1616"/>
<!-- Copy -->
<rect x="615" y="15" width="28" height="34" fill="#f2f2f2" stroke="#b4b4b4" stroke-width="2"/>
<rect x="619" y="22" width="8" height="2" fill="#d0d0d0"/><rect x="619" y="26" width="8" height="2" fill="#d0d0d0"/><rect x="619" y="30" width="8" height="2" fill="#d0d0d0"/><rect x="619" y="34" width="8" height="2" fill="#d0d0d0"/><rect x="619" y="38" width="8" height="2" fill="#d0d0d0"/>
<path d="M629,23 L657,23 L657,49 L649,57 L629,57 Z" fill="#f8f8f8" stroke="#868680" stroke-width="2"/>
<path d="M649,57 L649,49 L657,49" fill="#c8c8c8" stroke="#868680" stroke-width="1.5"/>
<rect x="633" y="30" width="18" height="2" fill="#b8b8b8"/><rect x="633" y="34" width="18" height="2" fill="#b8b8b8"/><rect x="633" y="38" width="14" height="2" fill="#b8b8b8"/><rect x="633" y="42" width="18" height="2" fill="#b8b8b8"/>
<!-- Paste -->
<rect x="732" y="18" width="36" height="38" rx="3" fill="#9a9a9a"/>
<rect x="744" y="14" width="12" height="8" rx="2" fill="#929292"/>
<path d="M738,24 L762,24 L762,46 L756,52 L738,52 Z" fill="#a6a6a6" stroke="#949494" stroke-width="1"/>
<rect x="742" y="28" width="16" height="2" fill="#8e8e8e"/><rect x="742" y="32" width="16" height="2" fill="#8e8e8e"/><rect x="742" y="36" width="10" height="2" fill="#8e8e8e"/>
<!-- Delete -->
<rect x="849" y="14.5" width="30" height="12" fill="#f0f0f0" stroke="#7e7e78" stroke-width="1.8"/>
<rect x="843" y="19" width="42" height="14" fill="#76a4dc" stroke="#1e3e8c" stroke-width="2"/>
<rect x="845" y="27" width="38" height="3" fill="#9ec0ea"/>
<rect x="881" y="25" width="2" height="2" fill="#c01010"/>
<rect x="845" y="33" width="38" height="22" fill="#f0f0ee" stroke="#86867e" stroke-width="2"/>
<path d="M849,36 L849,44 M853,36 L853,42 M857,36 L857,44 M861,36 L861,42 M865,36 L865,44 M869,36 L869,42 M873,36 L873,44 M877,36 L877,42" stroke="#8a8a8a" stroke-width="1.5"/>
<rect x="846" y="48" width="36" height="4" fill="#d8d8d4"/>
<!-- Undo -->
<ellipse cx="996" cy="50" rx="16" ry="5" fill="url(#gshadow)"/>
<path d="M979,29 L995,14 L995,22 C1005,22 1012,28 1012,38 C1012,46 1007,51 1000,55 C1003,49 1004,45 1004,42 C1004,38 1001,36 995,36 L995,44 Z" fill="#f2dc3a" stroke="#c8a400" stroke-width="1.5"/>
<!-- Redo -->
<ellipse cx="1117" cy="50" rx="16" ry="5" fill="url(#gshadow)" opacity="0.5"/>
<path d="M1132,29 L1117,14 L1117,22 C1107,22 1100,28 1100,38 C1100,46 1105,51 1112,55 C1109,49 1108,45 1108,42 C1108,38 1111,36 1117,36 L1117,44 Z" fill="#9a9a9a" stroke="#929292" stroke-width="1"/>
<!-- Sync -->
<ellipse cx="1482" cy="51" rx="18" ry="4" fill="url(#gshadow)"/>
<path d="M1472,18 L1492,18 L1492,32 L1500,32 L1482,51 L1464,32 L1472,32 Z" fill="url(#ggreen)" stroke="#3c7c0c" stroke-width="1.5"/>
<!-- About -->
<ellipse cx="1617" cy="54" rx="12" ry="3" fill="url(#gshadow)"/>
<path d="M1617,15 C1608,15 1603,21 1603,28 C1603,34 1607,38 1610,42 L1610,46 L1624,46 L1624,42 C1627,38 1631,34 1631,28 C1631,21 1626,15 1617,15 Z" fill="url(#gbulb)" stroke="#8ca4c8" stroke-width="1.8"/>
<rect x="1612" y="33" width="10" height="8" fill="#f4f8ff"/>
<rect x="1611" y="45" width="12" height="8" fill="#d8d478" stroke="#a8a050" stroke-width="1"/>
<rect x="1614" y="52" width="6" height="4" fill="#505050"/>
</svg>

<div style="position:absolute;left:1194px;top:15.73px;font-size:22px;line-height:25.30px;color:#000;white-space:nowrap;letter-spacing:-0.6px;-webkit-text-stroke-width:0.45px;">Zoom</div>
<div style="position:absolute;left:1256px;top:6px;width:144px;height:41px;box-sizing:border-box;background:linear-gradient(#ffffff 0%,#fbfbfb 45%,#ececec 50%,#f2f2f2 100%);border:2px solid #8c8c8c;border-radius:9px;box-shadow:0 1px 1px rgba(0,0,0,0.12);"></div>
<svg style="position:absolute;left:1375px;top:15.0px" width="12" height="23"><polygon points="1,8 6,0 11,8" fill="#3c3c3c"/><polygon points="1,15 6,23 11,15" fill="#3c3c3c"/></svg>
<div style="position:absolute;left:1283px;top:14.65px;font-size:21px;line-height:24.15px;color:#000;white-space:nowrap;letter-spacing:-1.6px;-webkit-text-stroke-width:0.45px;">50%</div>
<div style="position:absolute;left:1204px;top:67.73px;font-size:22px;line-height:25.30px;color:#000;white-space:nowrap;letter-spacing:-0.9px;-webkit-text-stroke-width:0.45px;">Grid</div>
<div style="position:absolute;left:1256px;top:66px;width:28px;height:28px;box-sizing:border-box;background:linear-gradient(#ffffff 0%,#f8f8f8 45%,#ececec 55%,#f4f4f4 100%);border:2px solid #8c8c8c;border-radius:5px;box-shadow:0 1px 1px rgba(0,0,0,0.12);"></div>
<div style="position:absolute;left:1304px;top:58px;width:64px;height:42px;box-sizing:border-box;background:#fff;border:2px solid #9c9c9c;box-shadow:inset 0 2px 0 #e0e0e0;"></div>
<div style="position:absolute;left:1298px;width:60px;text-align:right;top:65.23px;font-size:22px;line-height:25.30px;color:#000;white-space:nowrap;letter-spacing:-1.5px;-webkit-text-stroke-width:0.45px;">20</div>
<div style="position:absolute;left:1376px;top:56px;width:26px;height:44px;box-sizing:border-box;background:linear-gradient(#ffffff 0%,#fafafa 45%,#ececec 50%,#f4f4f4 100%);border:2px solid #9a9a9a;border-radius:12px;box-shadow:0 1px 1px rgba(0,0,0,0.12);"></div>
<svg style="position:absolute;left:1383.0px;top:65.0px" width="12" height="26"><polygon points="1,8 6,0 11,8" fill="#3c3c3c"/><polygon points="1,18 6,26 11,18" fill="#3c3c3c"/></svg>
<div style="position:absolute;left:33.4px;top:146.34px;font-size:26px;line-height:29.90px;color:#000;white-space:nowrap;-webkit-text-stroke-width:0.45px;">Name:</div>
<div style="position:absolute;left:130px;top:138px;width:324px;height:44px;box-sizing:border-box;background:#fff;border:2px solid #9c9c9c;box-shadow:inset 0 2px 0 #e0e0e0;"></div>
<div style="position:absolute;left:139.6px;top:146.34px;font-size:26px;line-height:29.90px;color:#000;white-space:nowrap;letter-spacing:1px;-webkit-text-stroke-width:0.45px;">push72</div>
<div style="position:absolute;left:33.4px;top:222.04px;font-size:26px;line-height:29.90px;color:#000;white-space:nowrap;letter-spacing:0.7px;-webkit-text-stroke-width:0.45px;">Color:</div>
<div style="position:absolute;left:140px;top:216px;width:184px;height:42px;box-sizing:border-box;background:linear-gradient(#ffffff 0%,#fbfbfb 45%,#ececec 50%,#f2f2f2 100%);border:2px solid #8c8c8c;border-radius:9px;box-shadow:0 1px 1px rgba(0,0,0,0.12);"></div>
<svg style="position:absolute;left:299px;top:225.5px" width="12" height="23"><polygon points="1,8 6,0 11,8" fill="#3c3c3c"/><polygon points="1,15 6,23 11,15" fill="#3c3c3c"/></svg>
<div style="position:absolute;left:167.9px;top:222.54px;font-size:26px;line-height:29.90px;color:#000;white-space:nowrap;letter-spacing:-1.2px;-webkit-text-stroke-width:0.45px;">Red</div>
<div style="position:absolute;left:42.1px;top:293.54px;font-size:26px;line-height:29.90px;color:#000;white-space:nowrap;letter-spacing:-2.5px;-webkit-text-stroke-width:0.45px;">X:</div>
<div style="position:absolute;left:84px;top:298px;width:82px;height:44px;box-sizing:border-box;background:#fff;border:2px solid #9c9c9c;box-shadow:inset 0 2px 0 #e0e0e0;"></div>
<div style="position:absolute;left:174px;top:298px;width:26px;height:44px;box-sizing:border-box;background:linear-gradient(#ffffff 0%,#fafafa 45%,#ececec 50%,#f4f4f4 100%);border:2px solid #9a9a9a;border-radius:12px;box-shadow:0 1px 1px rgba(0,0,0,0.12);"></div>
<svg style="position:absolute;left:181.0px;top:307.0px" width="12" height="26"><polygon points="1,8 6,0 11,8" fill="#3c3c3c"/><polygon points="1,18 6,26 11,18" fill="#3c3c3c"/></svg>
<div style="position:absolute;left:76.5px;width:80px;text-align:right;top:305.64px;font-size:26px;line-height:29.90px;color:#000;white-space:nowrap;letter-spacing:1.2px;-webkit-text-stroke-width:0.45px;">388</div>
<div style="position:absolute;left:42.1px;top:361.64px;font-size:26px;line-height:29.90px;color:#000;white-space:nowrap;letter-spacing:-2.5px;-webkit-text-stroke-width:0.45px;">Y:</div>
<div style="position:absolute;left:84px;top:366px;width:82px;height:44px;box-sizing:border-box;background:#fff;border:2px solid #9c9c9c;box-shadow:inset 0 2px 0 #e0e0e0;"></div>
<div style="position:absolute;left:174px;top:366px;width:26px;height:44px;box-sizing:border-box;background:linear-gradient(#ffffff 0%,#fafafa 45%,#ececec 50%,#f4f4f4 100%);border:2px solid #9a9a9a;border-radius:12px;box-shadow:0 1px 1px rgba(0,0,0,0.12);"></div>
<svg style="position:absolute;left:181.0px;top:375.0px" width="12" height="26"><polygon points="1,8 6,0 11,8" fill="#3c3c3c"/><polygon points="1,18 6,26 11,18" fill="#3c3c3c"/></svg>
<div style="position:absolute;left:76.5px;width:80px;text-align:right;top:373.54px;font-size:26px;line-height:29.90px;color:#000;white-space:nowrap;letter-spacing:1.2px;-webkit-text-stroke-width:0.45px;">767</div>
<div style="position:absolute;left:238.2px;top:293.84px;font-size:26px;line-height:29.90px;color:#000;white-space:nowrap;letter-spacing:-3px;-webkit-text-stroke-width:0.45px;">W:</div>
<div style="position:absolute;left:286px;top:298px;width:82px;height:44px;box-sizing:border-box;background:#fff;border:2px solid #9c9c9c;box-shadow:inset 0 2px 0 #e0e0e0;"></div>
<div style="position:absolute;left:376px;top:298px;width:26px;height:44px;box-sizing:border-box;background:linear-gradient(#ffffff 0%,#fafafa 45%,#ececec 50%,#f4f4f4 100%);border:2px solid #9a9a9a;border-radius:12px;box-shadow:0 1px 1px rgba(0,0,0,0.12);"></div>
<svg style="position:absolute;left:383.0px;top:307.0px" width="12" height="26"><polygon points="1,8 6,0 11,8" fill="#3c3c3c"/><polygon points="1,18 6,26 11,18" fill="#3c3c3c"/></svg>
<div style="position:absolute;left:276.3px;width:80px;text-align:right;top:305.84px;font-size:26px;line-height:29.90px;color:#000;white-space:nowrap;letter-spacing:-0.7px;-webkit-text-stroke-width:0.45px;">86</div>
<div style="position:absolute;left:241.8px;top:363.54px;font-size:26px;line-height:29.90px;color:#000;white-space:nowrap;letter-spacing:-2px;-webkit-text-stroke-width:0.45px;">H:</div>
<div style="position:absolute;left:286px;top:368px;width:82px;height:44px;box-sizing:border-box;background:#fff;border:2px solid #9c9c9c;box-shadow:inset 0 2px 0 #e0e0e0;"></div>
<div style="position:absolute;left:376px;top:368px;width:26px;height:44px;box-sizing:border-box;background:linear-gradient(#ffffff 0%,#fafafa 45%,#ececec 50%,#f4f4f4 100%);border:2px solid #9a9a9a;border-radius:12px;box-shadow:0 1px 1px rgba(0,0,0,0.12);"></div>
<svg style="position:absolute;left:383.0px;top:377.0px" width="12" height="26"><polygon points="1,8 6,0 11,8" fill="#3c3c3c"/><polygon points="1,18 6,26 11,18" fill="#3c3c3c"/></svg>
<div style="position:absolute;left:276.3px;width:80px;text-align:right;top:375.54px;font-size:26px;line-height:29.90px;color:#000;white-space:nowrap;letter-spacing:-0.7px;-webkit-text-stroke-width:0.45px;">58</div>
<div style="position:absolute;left:8px;top:478px;width:490px;height:402px;box-sizing:border-box;background:#e2e2e2;border:2px solid #c8c8c8;border-radius:8px;"></div>
<div style="position:absolute;left:62px;top:454px;width:380px;height:42px;box-sizing:border-box;background:linear-gradient(#ffffff 0%,#fafafa 45%,#ececec 50%,#f0f0f0 100%);border:2px solid #8a8a8a;border-radius:10px;box-shadow:0 1px 1px rgba(0,0,0,0.15);"></div>
<div style="position:absolute;left:322px;top:454px;width:120px;height:42px;box-sizing:border-box;background:linear-gradient(#7c7c7c 0%,#8e8e8e 15%,#949494 100%);border:2px solid #767676;border-left:none;border-radius:0 10px 10px 0;"></div>
<div style="position:absolute;left:186px;top:460px;width:2px;height:30px;box-sizing:border-box;background:#c4c4c4;"></div>
<div style="position:absolute;left:64.2px;width:120px;text-align:center;top:460.04px;font-size:26px;line-height:29.90px;color:#000;white-space:nowrap;letter-spacing:-1.4px;-webkit-text-stroke-width:0.45px;">OSC</div>
<div style="position:absolute;left:196.8px;width:120px;text-align:center;top:460.04px;font-size:26px;line-height:29.90px;color:#000;white-space:nowrap;-webkit-text-stroke-width:0.45px;">MIDI</div>
<div style="position:absolute;left:326.5px;width:120px;text-align:center;top:460.04px;font-size:26px;line-height:29.90px;color:#f4f4f4;white-space:nowrap;letter-spacing:-1.3px;-webkit-text-stroke-width:0.45px;">Key</div>
<div style="position:absolute;left:35.4px;top:537.64px;font-size:26px;line-height:29.90px;color:#000;white-space:nowrap;letter-spacing:-1px;-webkit-text-stroke-width:0.45px;">Key:</div>
<div style="position:absolute;left:135px;top:533px;width:253px;height:40px;box-sizing:border-box;background:linear-gradient(#ffffff 0%,#fbfbfb 45%,#ececec 50%,#f2f2f2 100%);border:2px solid #8c8c8c;border-radius:9px;box-shadow:0 1px 1px rgba(0,0,0,0.12);"></div>
<svg style="position:absolute;left:363px;top:541.5px" width="12" height="23"><polygon points="1,8 6,0 11,8" fill="#3c3c3c"/><polygon points="1,15 6,23 11,15" fill="#3c3c3c"/></svg>
<div style="position:absolute;left:161.4px;top:537.64px;font-size:26px;line-height:29.90px;color:#000;white-space:nowrap;-webkit-text-stroke-width:0.45px;">M</div>
<div style="position:absolute;left:48px;top:634px;width:28px;height:28px;box-sizing:border-box;background:linear-gradient(#ffffff 0%,#f8f8f8 45%,#ececec 55%,#f4f4f4 100%);border:2px solid #8c8c8c;border-radius:5px;box-shadow:0 1px 1px rgba(0,0,0,0.12);"></div>
<div style="position:absolute;left:88.9px;top:633.64px;font-size:26px;line-height:29.90px;color:#000;white-space:nowrap;letter-spacing:1.1px;-webkit-text-stroke-width:0.45px;">Control</div>
<div style="position:absolute;left:280px;top:634px;width:28px;height:28px;box-sizing:border-box;background:linear-gradient(#ffffff 0%,#f8f8f8 45%,#ececec 55%,#f4f4f4 100%);border:2px solid #8c8c8c;border-radius:5px;box-shadow:0 1px 1px rgba(0,0,0,0.12);"></div>
<div style="position:absolute;left:320px;top:633.64px;font-size:26px;line-height:29.90px;color:#000;white-space:nowrap;letter-spacing:1.8px;-webkit-text-stroke-width:0.45px;">Alt</div>
<div style="position:absolute;left:48px;top:706px;width:28px;height:28px;box-sizing:border-box;background:linear-gradient(#d8ecff 0%,#a8d0f6 50%,#78b4ee 55%,#c8e6ff 100%);border:2px solid #50589c;border-radius:5px;"></div>
<svg style="position:absolute;left:48px;top:700px" width="34" height="36"><path d="M5,17 L9,14 L14,21 L27,2 L31,4 L15,29 L12,29 Z" fill="#0e1e3e"/></svg>
<div style="position:absolute;left:88.9px;top:705.64px;font-size:26px;line-height:29.90px;color:#000;white-space:nowrap;letter-spacing:0.7px;-webkit-text-stroke-width:0.45px;">Shift</div>
<div style="position:absolute;left:280px;top:706px;width:28px;height:28px;box-sizing:border-box;background:linear-gradient(#ffffff 0%,#f8f8f8 45%,#ececec 55%,#f4f4f4 100%);border:2px solid #8c8c8c;border-radius:5px;box-shadow:0 1px 1px rgba(0,0,0,0.12);"></div>
<div style="position:absolute;left:320px;top:705.64px;font-size:26px;line-height:29.90px;color:#000;white-space:nowrap;letter-spacing:1px;-webkit-text-stroke-width:0.45px;">Command</div>
<div style="position:absolute;left:46px;top:922px;width:28px;height:28px;box-sizing:border-box;background:linear-gradient(#ffffff 0%,#f8f8f8 45%,#ececec 55%,#f4f4f4 100%);border:2px solid #8c8c8c;border-radius:5px;box-shadow:0 1px 1px rgba(0,0,0,0.12);"></div>
<div style="position:absolute;left:87.2px;top:921.34px;font-size:26px;line-height:29.90px;color:#000;white-space:nowrap;letter-spacing:1.1px;-webkit-text-stroke-width:0.45px;">Local feedback off</div>
<div style="position:absolute;left:46px;top:980px;width:28px;height:27px;box-sizing:border-box;background:linear-gradient(#ffffff 0%,#f8f8f8 45%,#ececec 55%,#f4f4f4 100%);border:2px solid #8c8c8c;border-radius:5px;box-shadow:0 1px 1px rgba(0,0,0,0.12);"></div>
<div style="position:absolute;left:87px;top:979.44px;font-size:26px;line-height:29.90px;color:#000;white-space:nowrap;letter-spacing:1.25px;-webkit-text-stroke-width:0.45px;">Y position velocity</div>
<div style="position:absolute;left:105px;top:1038px;width:26px;height:27px;box-sizing:border-box;background:linear-gradient(#ffffff 0%,#f8f8f8 45%,#ececec 55%,#f4f4f4 100%);border:2px solid #8c8c8c;border-radius:5px;box-shadow:0 1px 1px rgba(0,0,0,0.12);opacity:0.55;"></div>
<div style="position:absolute;left:145.3px;top:1037.54px;font-size:26px;line-height:29.90px;color:#9a9a9a;white-space:nowrap;letter-spacing:0.6px;-webkit-text-stroke-width:0.45px;">Invert</div>
<svg style="position:absolute;left:516px;top:655px" width="14" height="12"><path d="M2,8 L6,5 L8,3 L10,3" stroke="#5a5a5a" stroke-width="2" fill="none"/><path d="M4,9 L12,9" stroke="#d8d8d8" stroke-width="1.5"/></svg>
<!--CONTENT-->
</body></html>
